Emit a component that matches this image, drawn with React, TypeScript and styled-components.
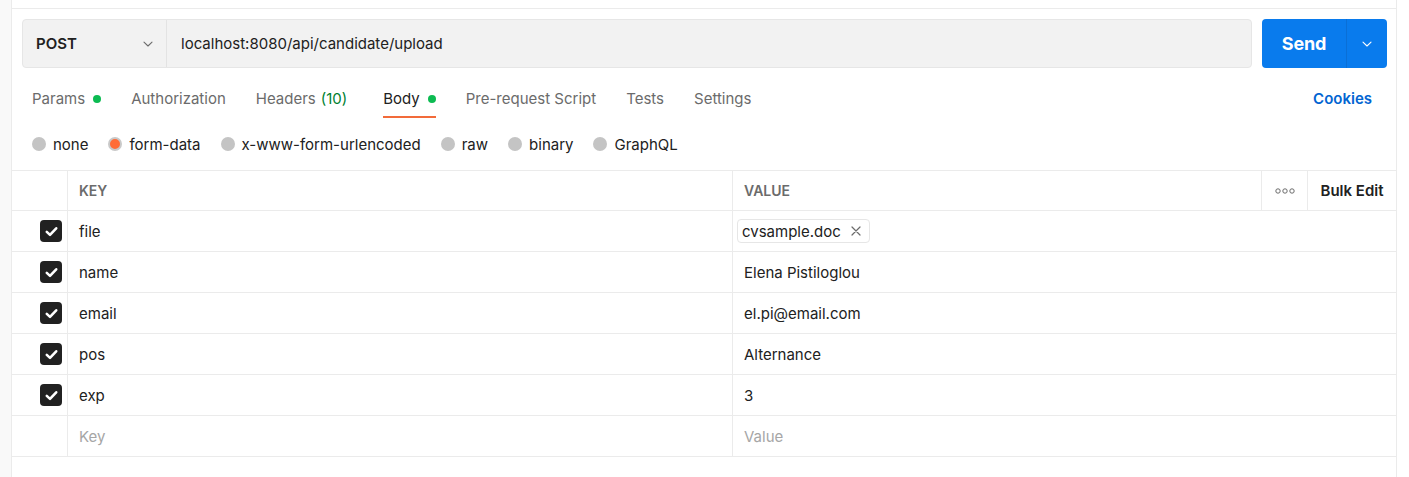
import styled, { createGlobalStyle } from "styled-components";

const GlobalStyle = createGlobalStyle`
  html, body {
    margin: 0;
    padding: 0;
    background: #ffffff;
  }
  body {
    font-family: Inter, "Open Sans", "Liberation Sans", sans-serif;
    color: #212121;
    -webkit-font-smoothing: antialiased;
  }
`;

const Page = styled.div`
  display: flex;
  height: 477px;
  overflow: hidden;
`;

const SideStrip = styled.div`
  width: 11px;
  background: #f9f9f9;
  border-right: 1px solid #ebebeb;
`;

const Main = styled.div`
  width: 1384px;
  border-right: 1px solid #ebebeb;
  display: flex;
  flex-direction: column;
`;

const TopStrip = styled.div`
  height: 8px;
  border-bottom: 1px solid #ebebeb;
`;

const RequestRow = styled.div`
  display: flex;
  gap: 10px;
  padding: 10px 9px 0 10px;
`;

const UrlBar = styled.div`
  flex: 1;
  height: 49px;
  box-sizing: border-box;
  display: flex;
  background: #f2f2f2;
  border: 1px solid #e6e6e6;
  border-radius: 4px;
`;

const MethodSelect = styled.div`
  width: 144px;
  box-sizing: border-box;
  display: flex;
  align-items: center;
  justify-content: space-between;
  padding: 0 12px 0 13px;
  border-right: 1px solid #e3e3e3;
  font-size: 15px;
  font-weight: 600;
  color: #212121;
`;

const UrlText = styled.div`
  display: flex;
  align-items: center;
  padding-left: 14px;
  font-size: 15px;
  color: #212121;
`;

const SendButton = styled.div`
  width: 125px;
  height: 49px;
  display: flex;
  background: #097bed;
  border-radius: 4px;
  color: #ffffff;
`;

const SendLabel = styled.div`
  width: 84px;
  display: flex;
  align-items: center;
  justify-content: center;
  font-size: 18px;
  font-weight: 700;
  letter-spacing: -0.2px;
  border-right: 1px solid #0a6fd6;
`;

const SendCaret = styled.div`
  flex: 1;
  display: flex;
  align-items: center;
  justify-content: center;
`;

const TabsRow = styled.div`
  display: flex;
  align-items: stretch;
  height: 40px;
  margin-top: 10px;
  padding: 0 24px 0 8px;
`;

const Tab = styled.div<{ $active?: boolean; $extra?: number }>`
  position: relative;
  display: flex;
  align-items: center;
  gap: 8px;
  padding: 0 12px;
  margin-right: ${(p) => 6 + (p.$extra ?? 0)}px;
  font-size: 15px;
  color: ${(p) => (p.$active ? "#212121" : "#6b6b6b")};

  &::after {
    content: "";
    display: ${(p) => (p.$active ? "block" : "none")};
    position: absolute;
    left: 12px;
    right: 12px;
    bottom: 0;
    height: 2px;
    background: #f26b3a;
  }
`;

const Dot = styled.span`
  width: 8px;
  height: 8px;
  border-radius: 50%;
  background: #0cbb52;
  margin-top: 1px;
`;

const Count = styled.span`
  color: #007f31;
  margin-left: -3px;
`;

const Spacer = styled.div`
  flex: 1;
`;

const CookiesLink = styled.div`
  display: flex;
  align-items: center;
  font-size: 15px;
  font-weight: 600;
  color: #0265d2;
`;

const RadioRow = styled.div`
  display: flex;
  align-items: center;
  height: 52px;
  padding-left: 20px;
  gap: 20px;
`;

const RadioItem = styled.div`
  display: flex;
  align-items: center;
  gap: 7px;
  font-size: 15px;
  color: #212121;
`;

const RadioCircle = styled.span<{ $checked?: boolean }>`
  width: 14px;
  height: 14px;
  box-sizing: border-box;
  border-radius: 50%;
  background: ${(p) => (p.$checked ? "#ff6c37" : "#c4c4c4")};
  border: ${(p) => (p.$checked ? "2px solid #c9c9c9" : "none")};
`;

const Table = styled.div`
  border-top: 1px solid #ebebeb;
`;

const Row = styled.div`
  display: grid;
  grid-template-columns: 56px 665px 1fr;
  height: 41px;
  box-sizing: border-box;
  border-bottom: 1px solid #ebebeb;
`;

const HeaderRow = styled(Row)`
  grid-template-columns: 56px 665px 529px 46px 1fr;
  height: 40px;
`;

const Cell = styled.div<{ $border?: boolean; $pad?: number }>`
  display: flex;
  align-items: center;
  padding-left: ${(p) => (p.$pad ?? 11)}px;
  border-right: ${(p) => (p.$border ? "1px solid #ebebeb" : "none")};
  font-size: 15px;
  color: #212121;
  min-width: 0;
`;

const HeadCell = styled(Cell)`
  font-size: 14px;
  font-weight: 600;
  color: #6b6b6b;
`;

const CheckCell = styled.div`
  display: flex;
  align-items: center;
  justify-content: flex-end;
  padding-right: 5px;
  border-right: 1px solid #ebebeb;
`;

const CheckBox = styled.div`
  width: 22px;
  height: 22px;
  border-radius: 4px;
  background: #212121;
  display: flex;
  align-items: center;
  justify-content: center;
`;

const Placeholder = styled.span`
  color: #a6a6a6;
`;

const FileChip = styled.div`
  display: flex;
  align-items: center;
  gap: 10px;
  height: 24px;
  box-sizing: border-box;
  padding: 0 8px 0 4px;
  border: 1px solid #e6e6e6;
  border-radius: 4px;
  font-size: 15px;
`;

const MoreCell = styled.div`
  display: flex;
  align-items: center;
  justify-content: center;
  border-right: 1px solid #ebebeb;
`;

const BulkCell = styled.div`
  display: flex;
  align-items: center;
  justify-content: center;
  font-size: 15px;
  font-weight: 600;
  color: #212121;
`;

const Chevron = ({ color = "#6b6b6b", size = 12 }: { color?: string; size?: number }) => (
  <svg width={size} height={size} viewBox="0 0 12 12" fill="none">
    <path d="M2 4.2 L6 8 L10 4.2" stroke={color} strokeWidth="1.1" strokeLinecap="round" strokeLinejoin="round" />
  </svg>
);

const Tick = () => (
  <svg width="15" height="15" viewBox="0 0 14 14" fill="none">
    <path d="M2.6 7.3 L5.6 10.1 L11.4 4" stroke="#ffffff" strokeWidth="2.4" strokeLinecap="round" strokeLinejoin="round" />
  </svg>
);

const Cross = () => (
  <svg width="10" height="10" viewBox="0 0 10 10" fill="none">
    <path d="M1 1 L9 9 M9 1 L1 9" stroke="#6b6b6b" strokeWidth="1.2" strokeLinecap="round" />
  </svg>
);

const Dots = () => (
  <svg width="20" height="6" viewBox="0 0 20 6" fill="none">
    {[3, 10, 17].map((cx) => (
      <circle key={cx} cx={cx} cy="3" r="2.2" stroke="#6b6b6b" strokeWidth="1" />
    ))}
  </svg>
);

const radios = [
  { label: "none" },
  { label: "form-data", checked: true },
  { label: "x-www-form-urlencoded" },
  { label: "raw" },
  { label: "binary" },
  { label: "GraphQL" },
];

const rows = [
  { key: "name", value: "Elena Pistiloglou" },
  { key: "email", value: "el.pi@email.com" },
  { key: "pos", value: "Alternance" },
  { key: "exp", value: "3" },
];

export default function App() {
  return (
    <>
      <GlobalStyle />
      <Page>
        <SideStrip />
        <Main>
          <TopStrip />
          <RequestRow>
            <UrlBar>
              <MethodSelect>
                POST
                <Chevron />
              </MethodSelect>
              <UrlText>localhost:8080/api/candidate/upload</UrlText>
            </UrlBar>
            <SendButton>
              <SendLabel>Send</SendLabel>
              <SendCaret>
                <Chevron color="#ffffff" />
              </SendCaret>
            </SendButton>
          </RequestRow>

          <TabsRow>
            <Tab>
              Params <Dot />
            </Tab>
            <Tab>Authorization</Tab>
            <Tab $extra={6}>
              Headers <Count>(10)</Count>
            </Tab>
            <Tab $active>
              Body <Dot />
            </Tab>
            <Tab>Pre-request Script</Tab>
            <Tab>Tests</Tab>
            <Tab>Settings</Tab>
            <Spacer />
            <CookiesLink>Cookies</CookiesLink>
          </TabsRow>

          <RadioRow>
            {radios.map((r) => (
              <RadioItem key={r.label}>
                <RadioCircle $checked={r.checked} />
                {r.label}
              </RadioItem>
            ))}
          </RadioRow>

          <Table>
            <HeaderRow>
              <CheckCell />
              <HeadCell $border>KEY</HeadCell>
              <HeadCell $border>VALUE</HeadCell>
              <MoreCell>
                <Dots />
              </MoreCell>
              <BulkCell>Bulk Edit</BulkCell>
            </HeaderRow>
            <Row>
              <CheckCell>
                <CheckBox>
                  <Tick />
                </CheckBox>
              </CheckCell>
              <Cell $border>file</Cell>
              <Cell $pad={4}>
                <FileChip>
                  cvsample.doc
                  <Cross />
                </FileChip>
              </Cell>
            </Row>
            {rows.map((r) => (
              <Row key={r.key}>
                <CheckCell>
                  <CheckBox>
                    <Tick />
                  </CheckBox>
                </CheckCell>
                <Cell $border>{r.key}</Cell>
                <Cell>{r.value}</Cell>
              </Row>
            ))}
            <Row>
              <CheckCell />
              <Cell $border>
                <Placeholder>Key</Placeholder>
              </Cell>
              <Cell>
                <Placeholder>Value</Placeholder>
              </Cell>
            </Row>
          </Table>
        </Main>
      </Page>
    </>
  );
}
